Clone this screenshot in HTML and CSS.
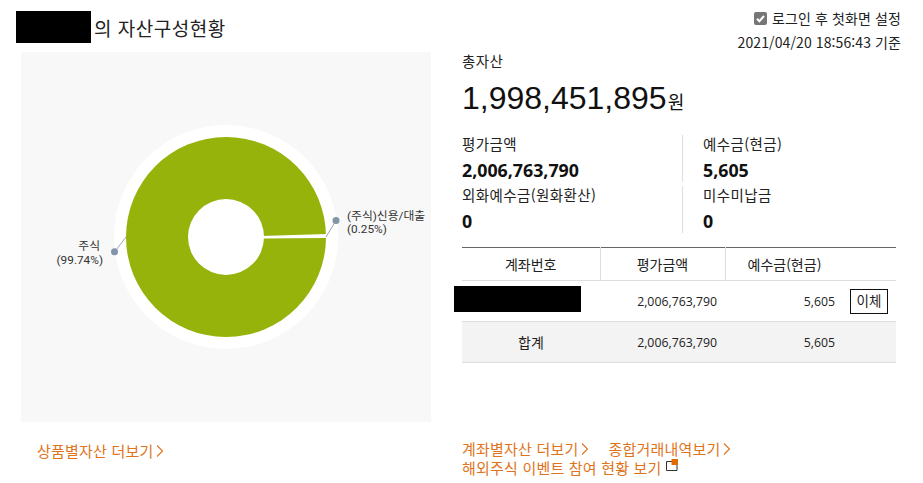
FILE: index.html
```html
<!DOCTYPE html>
<html lang="ko">
<head>
  <meta charset="UTF-8" />
  <title>자산구성현황</title>
  <link rel="stylesheet" href="styles.css">
</head>
<body>
  <header class="top">
    <h2 class="title"><span class="mask mask-name"></span><span>의 자산구성현황</span></h2>
    <div class="top-right">
      <label class="first-page"><span class="check"><svg width="13" height="13" viewBox="0 0 13 13"><path d="M3 6.800 5.400 9.200 10 4" fill="none" stroke="#fff" stroke-width="2"/></svg></span>로그인 후 첫화면 설정</label>
      <div class="stamp">2021/04/20 18:56:43 기준</div>
    </div>
  </header>

  <main class="content">
    <section class="left">
      <div class="chart">
        <svg width="410" height="370" viewBox="0 0 410 370">
          <circle cx="205" cy="185" r="112" fill="#fff"/>
          <circle cx="205" cy="185" r="100" fill="#95b30a"/>
          <circle cx="205" cy="185" r="38" fill="#fff"/>
          <path d="M240 184 305.500 182 305.500 186 240 186.500z" fill="#fff"/>
          <path d="M93.500 200 105 185" stroke="#98a6b5" stroke-width="1" fill="none"/>
          <circle cx="93.500" cy="199.700" r="3.500" fill="#8195a8"/>
          <path d="M315 168.500 305 185" stroke="#98a6b5" stroke-width="1" fill="none"/>
          <circle cx="315" cy="168.500" r="3.500" fill="#8195a8"/>
          <text class="chart-label" text-anchor="end" x="79" y="198">주식</text>
          <text class="chart-label" text-anchor="end" x="82" y="212">(99.74%)</text>
          <text class="chart-label" x="326" y="168">(주식)신용/대출</text>
          <text class="chart-label" x="326" y="181">(0.25%)</text>
        </svg>
      </div>
      <div class="links links-left">
        <a class="more">상품별자산 더보기<svg class="chev" width="8" height="12" viewBox="0 0 8 12"><path d="M1 .5 6.500 6 1 11.500" fill="none" stroke="#e0741c" stroke-width="1.100"/></svg></a>
      </div>
    </section>

    <section class="right">
      <div class="total-label">총자산</div>
      <div class="total"><span class="total-num">1,998,451,895</span><span class="total-won">원</span></div>

      <div class="stats">
        <div class="stat"><div class="stat-label">평가금액</div><div class="stat-val">2,006,763,790</div></div>
        <div class="stat stat-r"><div class="stat-label">예수금(현금)</div><div class="stat-val">5,605</div></div>
        <div class="stat"><div class="stat-label">외화예수금(원화환산)</div><div class="stat-val">0</div></div>
        <div class="stat stat-r"><div class="stat-label">미수미납금</div><div class="stat-val">0</div></div>
      </div>

      <table class="accounts">
        <thead>
          <tr><th class="c1">계좌번호</th><th class="c2">평가금액</th><th class="c3"><span class="th3">예수금(현금)</span></th></tr>
        </thead>
        <tbody>
          <tr>
            <td class="acct"><span class="mask mask-acct"></span></td>
            <td class="amt">2,006,763,790</td>
            <td class="dep"><span class="dep-num">5,605</span><button class="send">이체</button></td>
          </tr>
          <tr class="sum">
            <td class="sum-label">합계</td>
            <td class="amt">2,006,763,790</td>
            <td class="dep"><span class="dep-num">5,605</span></td>
          </tr>
        </tbody>
      </table>

      <div class="links links-right">
        <div class="link-row">
          <a class="more">계좌별자산 더보기<svg class="chev" width="8" height="12" viewBox="0 0 8 12"><path d="M1 .5 6.500 6 1 11.500" fill="none" stroke="#e0741c" stroke-width="1.100"/></svg></a>
          <a class="more">종합거래내역보기<svg class="chev" width="8" height="12" viewBox="0 0 8 12"><path d="M1 .5 6.500 6 1 11.500" fill="none" stroke="#e0741c" stroke-width="1.100"/></svg></a>
        </div>
        <div class="link-row">
          <a class="more">해외주식 이벤트 참여 현황 보기<svg class="ext" width="12" height="12" viewBox="0 0 12 12"><path d="M.5 2.500h10.500v9H.5z" fill="#fff" stroke="#333" stroke-width="1"/><path d="M5.500 0H12V6H5.500z" fill="#e06c00"/></svg></a>
        </div>
      </div>
    </section>
  </main>
</body>
</html>
```

FILE: styles.css
```css
* { box-sizing: border-box; }
html, body { margin: 0; height: 483px; overflow: hidden; }
body {
  font-family: "Noto Sans CJK KR", "Noto Sans", sans-serif;
  font-size: 14.5px;
  letter-spacing: .4px;
  color: #222;
  background: #fff;
}

.mask { display: inline-block; background: #000; }

/* Top */
.top {
  display: flex;
  justify-content: space-between;
  height: 52px;
  padding: 0 22px 0 16px;
}
.title {
  display: flex;
  align-items: center;
  gap: 3px;
  height: 32px;
  margin: 11px 0 0;
  font-size: 19px;
  letter-spacing: .5px;
  font-weight: 400;
  color: #222;
}
.mask-name { width: 75px; height: 32px; }
.top-right { text-align: right; font-size: 14px; letter-spacing: .1px; padding-top: 8px; }
.first-page { display: flex; align-items: center; justify-content: flex-end; gap: 5px; height: 20px; }
.check {
  display: flex;
  width: 13px;
  height: 13px;
  background: #767676;
  border-radius: 2px;
}
.stamp { margin-top: 4px; height: 20px; line-height: 20px; }

/* Columns */
.content { display: flex; padding-left: 21px; }
.left { width: 410px; }
.right { width: 434px; margin-left: 31px; }

.chart { height: 370px; background: #f8f8f8; }
.chart svg { display: block; }
.chart-label { font-family: "Roboto", "Noto Sans CJK KR", sans-serif; font-size: 11.800px; letter-spacing: 0; fill: #333; }

.links { color: #e0741c; font-size: 15px; letter-spacing: .2px; }
.links-left { margin-top: 18px; padding-left: 16px; }
.more { display: inline-flex; align-items: center; gap: 3px; height: 19px; line-height: 19px; }
.link-row { display: flex; gap: 19px; height: 19px; }
.ext { margin: -5px 0 0 1px; }

/* Total */
.total-label { height: 18px; line-height: 18px; }
.total { display: flex; align-items: baseline; margin-top: 7px; height: 43px; line-height: 43px; color: #111; }
.total-num { font-family: "Liberation Sans", sans-serif; font-size: 32px; letter-spacing: 0; }
.total-won { font-size: 18px; margin-left: 1px; letter-spacing: 0; }

/* Stats */
.stats {
  display: grid;
  grid-template-columns: 220px 1fr;
  grid-auto-rows: 47px;
  row-gap: 4px;
  margin-top: 15px;
}
.stat-r { border-left: 1px solid #ddd; padding-left: 20px; }
.stat-label { height: 18px; line-height: 18px; }
.stat-val {
  height: 24px;
  margin-top: 5px;
  line-height: 24px;
  font-family: "Open Sans", sans-serif;
  font-size: 17.800px;
  letter-spacing: 0;
  font-weight: 700;
  color: #111;
}

/* Table */
.accounts {
  width: 434px;
  margin-top: 14px;
  border-collapse: collapse;
  table-layout: fixed;
  border-top: 1px solid #666;
  font-size: 12.300px;
  letter-spacing: 0;
}
.accounts th {
  height: 33px;
  font-weight: 400;
  border-bottom: 1px solid #ddd;
  border-right: 1px solid #ddd;
  padding: 0;
  font-size: 14px;
}
.accounts th:last-child { border-right: 0; text-align: left; }
.th3 { margin-left: 22px; }
.c1 { width: 138px; }
.c2 { width: 125px; }
.accounts td {
  height: 41px;
  padding: 0;
  text-align: center;
  border-bottom: 1px solid #ddd;
  position: relative;
}
.accounts .sum td { background: #f3f3f3; }
.accounts .sum-label { font-size: 14px; }
.accounts .amt { font-family: "Open Sans", sans-serif; text-align: right; padding-right: 8px; }
.accounts .dep { text-align: left; font-family: "Open Sans", sans-serif; }
.dep-num { display: inline-block; width: 110px; text-align: right; }
.mask-acct { position: absolute; left: -8px; top: 5px; width: 127px; height: 26px; }
.send {
  width: 38px;
  height: 25px;
  margin-left: 15px;
  padding: 0 0 3px;
  background: #fff;
  border: 1px solid #111;
  font-family: "Noto Sans CJK KR", sans-serif;
  font-size: 13.500px;
  color: #222;
}

.links-right { margin-top: 76px; }
```
